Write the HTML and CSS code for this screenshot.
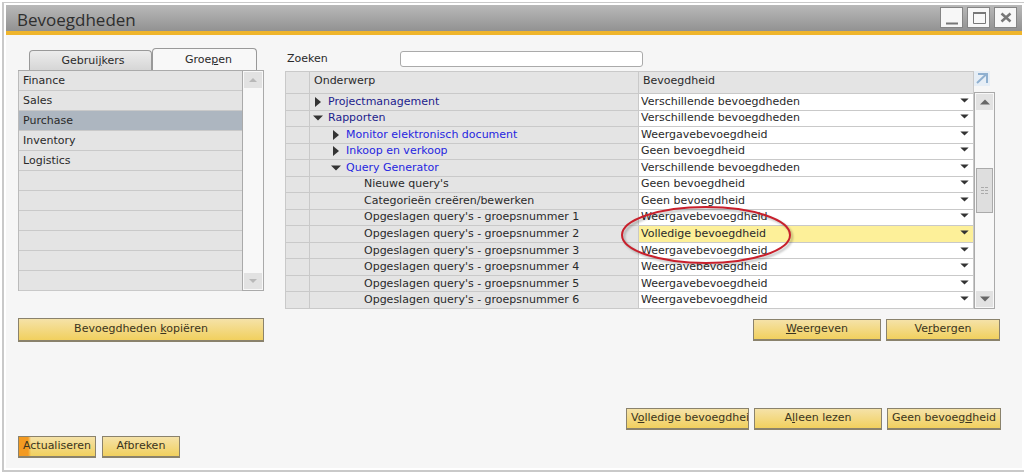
FILE: index.html
```
<!DOCTYPE html>
<html lang="nl">
<head>
<meta charset="utf-8">
<title>Bevoegdheden</title>
<link rel="stylesheet" href="styles.css">
</head>
<body>
<svg class="defs" aria-hidden="true">
  <symbol id="down" viewBox="0 0 10 6"><path d="M0 0.5H10L5 5.5Z"/></symbol>
  <symbol id="up" viewBox="0 0 10 6"><path d="M0 5.5H10L5 0.5Z"/></symbol>
  <symbol id="right" viewBox="0 0 6 10"><path d="M0 0V10L6 5Z"/></symbol>
</svg>
<div class="window">
  <header class="titlebar">
    <h1 class="title">Bevoegdheden</h1>
    <div class="controls">
      <button class="control" aria-label="Minimaliseren"><svg width="18" height="18"><path d="M3 14.5H15" stroke="#777" stroke-width="2"/></svg></button>
      <button class="control" aria-label="Maximaliseren"><svg width="18" height="18"><path d="M3.5 4V14.5H15.5V4" fill="none" stroke="#777"/><path d="M3 4H16" stroke="#777" stroke-width="2"/></svg></button>
      <button class="control" aria-label="Sluiten"><svg width="18" height="18"><path d="M4.500 4.500L13.500 12.500M13.500 4.500L4.500 12.500" stroke="#777" stroke-width="2.500"/></svg></button>
    </div>
  </header>
  <main class="content">
    <div class="columns">
      <section class="left">
        <div class="tabs" role="tablist">
          <button class="tab" role="tab" aria-selected="false">Gebrui<u>j</u>kers</button>
          <button class="tab active" role="tab" aria-selected="true">Groe<u>p</u>en</button>
        </div>
        <div class="listbox">
          <ul class="groups">
            <li class="group">Finance</li>
            <li class="group">Sales</li>
            <li class="group selected">Purchase</li>
            <li class="group">Inventory</li>
            <li class="group">Logistics</li>
            <li class="group"></li><li class="group"></li><li class="group"></li>
            <li class="group"></li><li class="group"></li><li class="group"></li>
          </ul>
          <div class="scrollbar idle">
            <button class="step" aria-label="Omhoog"><svg class="arrow"><use href="#up"/></svg></button>
            <button class="step" aria-label="Omlaag"><svg class="arrow"><use href="#down"/></svg></button>
          </div>
        </div>
        <button class="button copy">Bevoegdheden <u>k</u>opiëren</button>
      </section>
      <section class="right">
        <div class="search">
          <label class="search-label" for="zoeken">Zoeken</label>
          <input class="search-input" id="zoeken" type="text">
        </div>
        <div class="matrix">
          <table class="grid">
            <colgroup><col class="col-mark"><col class="col-subject"><col class="col-auth"></colgroup>
            <thead><tr><th></th><th class="head">Onderwerp</th><th class="head">Bevoegdheid</th></tr></thead>
            <tbody>
              <tr><td></td><td class="l1"><span class="node"><button class="toggle" aria-label="Uitvouwen"><svg class="closed"><use href="#right"/></svg></button>Projectmanagement</span></td><td class="auth"><span class="pick"><select aria-label="Projectmanagement"><option>Verschillende bevoegdheden</option></select><svg class="arrow"><use href="#down"/></svg></span></td></tr>
              <tr><td></td><td class="l1"><span class="node"><button class="toggle" aria-label="Samenvouwen"><svg class="arrow"><use href="#down"/></svg></button>Rapporten</span></td><td class="auth"><span class="pick"><select aria-label="Rapporten"><option>Verschillende bevoegdheden</option></select><svg class="arrow"><use href="#down"/></svg></span></td></tr>
              <tr><td></td><td class="l2"><span class="node"><button class="toggle" aria-label="Uitvouwen"><svg class="closed"><use href="#right"/></svg></button>Monitor elektronisch document</span></td><td class="auth"><span class="pick"><select aria-label="Monitor elektronisch document"><option>Weergavebevoegdheid</option></select><svg class="arrow"><use href="#down"/></svg></span></td></tr>
              <tr><td></td><td class="l2"><span class="node"><button class="toggle" aria-label="Uitvouwen"><svg class="closed"><use href="#right"/></svg></button>Inkoop en verkoop</span></td><td class="auth"><span class="pick"><select aria-label="Inkoop en verkoop"><option>Geen bevoegdheid</option></select><svg class="arrow"><use href="#down"/></svg></span></td></tr>
              <tr><td></td><td class="l2"><span class="node"><button class="toggle" aria-label="Samenvouwen"><svg class="arrow"><use href="#down"/></svg></button>Query Generator</span></td><td class="auth"><span class="pick"><select aria-label="Query Generator"><option>Verschillende bevoegdheden</option></select><svg class="arrow"><use href="#down"/></svg></span></td></tr>
              <tr><td></td><td class="l3">Nieuwe query's</td><td class="auth"><span class="pick"><select aria-label="Nieuwe query's"><option>Geen bevoegdheid</option></select><svg class="arrow"><use href="#down"/></svg></span></td></tr>
              <tr><td></td><td class="l3">Categorieën creëren/bewerken</td><td class="auth"><span class="pick"><select aria-label="Categorieën creëren/bewerken"><option>Geen bevoegdheid</option></select><svg class="arrow"><use href="#down"/></svg></span></td></tr>
              <tr><td></td><td class="l3">Opgeslagen query's - groepsnummer 1</td><td class="auth"><span class="pick"><select aria-label="Groepsnummer 1"><option>Weergavebevoegdheid</option></select><svg class="arrow"><use href="#down"/></svg></span></td></tr>
              <tr><td></td><td class="l3">Opgeslagen query's - groepsnummer 2</td><td class="auth current"><span class="pick"><select aria-label="Groepsnummer 2"><option>Volledige bevoegdheid</option></select><svg class="arrow"><use href="#down"/></svg></span><svg class="marker" viewBox="0 0 174 64"><ellipse cx="87" cy="31" rx="84" ry="28"/></svg></td></tr>
              <tr><td></td><td class="l3">Opgeslagen query's - groepsnummer 3</td><td class="auth"><span class="pick"><select aria-label="Groepsnummer 3"><option>Weergavebevoegdheid</option></select><svg class="arrow"><use href="#down"/></svg></span></td></tr>
              <tr><td></td><td class="l3">Opgeslagen query's - groepsnummer 4</td><td class="auth"><span class="pick"><select aria-label="Groepsnummer 4"><option>Weergavebevoegdheid</option></select><svg class="arrow"><use href="#down"/></svg></span></td></tr>
              <tr><td></td><td class="l3">Opgeslagen query's - groepsnummer 5</td><td class="auth"><span class="pick"><select aria-label="Groepsnummer 5"><option>Weergavebevoegdheid</option></select><svg class="arrow"><use href="#down"/></svg></span></td></tr>
              <tr><td></td><td class="l3">Opgeslagen query's - groepsnummer 6</td><td class="auth"><span class="pick"><select aria-label="Groepsnummer 6"><option>Weergavebevoegdheid</option></select><svg class="arrow"><use href="#down"/></svg></span></td></tr>
            </tbody>
          </table>
          <div class="side">
            <button class="expand" aria-label="Vergroten"><svg width="16" height="15"><path d="M3 12L12 3.500M4 3H13V12" fill="none" stroke="#8fb0d0" stroke-width="2"/></svg></button>
            <div class="scrollbar">
              <button class="step" aria-label="Omhoog"><svg class="arrow"><use href="#up"/></svg></button>
              <div class="before"></div>
              <div class="thumb"><svg width="9" height="9"><path d="M1 1.500H4M5 1.500H8M1 4.500H4M5 4.500H8M1 7.500H4M5 7.500H8" stroke="#aaa"/></svg></div>
              <div class="after"></div>
              <button class="step" aria-label="Omlaag"><svg class="arrow"><use href="#down"/></svg></button>
            </div>
          </div>
        </div>
        <div class="actions">
          <button class="button wide"><u>W</u>eergeven</button>
          <button class="button">Ve<u>r</u>bergen</button>
        </div>
      </section>
    </div>
    <div class="bulk">
      <button class="button clipped">V<u>o</u>lledige bevoegdheid</button>
      <button class="button wide">A<u>l</u>leen lezen</button>
      <button class="button">Geen bevoeg<u>d</u>heid</button>
    </div>
    <footer class="footer">
      <button class="button small primary">Actualiseren</button>
      <button class="button small">Afbreken</button>
    </footer>
  </main>
</div>
</body>
</html>
```
FILE: styles.css
```
* { box-sizing: border-box; }
body {
  margin: 0;
  padding: 2px 0 3px 2px;
  min-height: 100vh;
  display: flex;
  background: #fff;
  color: #2a2a2a;
  font: 11px/14px "DejaVu Sans", Verdana, sans-serif;
}
button, input, select { font: inherit; color: inherit; margin: 0; padding: 0; }
button { border: 0; background: none; }
.defs { position: absolute; width: 0; height: 0; }
.arrow { width: 10px; height: 6px; fill: #333; }
.closed { width: 6px; height: 10px; fill: #333; }

.window {
  flex: 1;
  display: flex;
  flex-direction: column;
  border: 2px solid #c9c9c9;
  border-top-width: 1px;
  border-right: 0;
  padding: 2px;
  background: #fff;
}
.titlebar {
  display: flex;
  justify-content: space-between;
  height: 30px;
  padding: 2px 5px 0 11px;
  background: linear-gradient(#b9b9b9, #929292);
  border-bottom: 4px solid #efb52c;
}
.title { margin: 0; font: 17px/26px "Open Sans", sans-serif; color: #2e2e2e; }
.controls { display: flex; gap: 4px; }
.control {
  width: 23px;
  height: 21px;
  display: grid;
  place-items: center;
  border: 1px solid #858585;
  background: #f7f7f7;
}
.content { flex: 1; padding: 13px 21px 10px 12px; background: #f6f6f6; }
.columns { display: grid; grid-template-columns: 246px 1fr; gap: 21px; }

.tabs { display: flex; align-items: flex-end; padding: 0 7px 0 11px; height: 22px; }
.tab {
  flex: 1;
  height: 20px;
  border: 1px solid #999;
  border-bottom: 0;
  border-radius: 4px 4px 0 0;
  background: linear-gradient(#ececec, #d6d6d6);
}
.tab:first-child { padding-left: 5px; }
.tab.active { flex: 0 0 105px; height: 22px; background: #f8f8f8; padding-left: 8px; }
.listbox { display: flex; border-top: 1px solid #aaa; }
.groups { flex: 1; margin: 0; padding: 0; list-style: none; border-left: 1px solid #bbb; }
.group {
  height: 20px;
  padding: 3px 4px 2px;
  border-bottom: 1px solid #c9c9c9;
  background: #e4e4e4;
}
.group.selected { background: #adb6c0; }

.scrollbar {
  flex: 1;
  display: flex;
  flex-direction: column;
  align-items: stretch;
  padding: 1px;
  border: 1px solid #aaa;
  background: #f8f8f8;
}
.idle { flex: 0 0 22px; justify-content: space-between; border-top: 0; }
.step { height: 16px; display: grid; place-items: center; background: #e2e2e2; }
.step .arrow { fill: #666; }
.idle .step .arrow { fill: #b8b8b8; width: 8px; }
.before { flex: 57; }
.after { flex: 77; }
.thumb { height: 45px; display: grid; place-items: center; border: 1px solid #aaa; background: #dedede; }

.button {
  width: 114px;
  height: 22px;
  padding: 0 4px 2px;
  border: 1px solid #8a826c;
  border-bottom-width: 2px;
  background: linear-gradient(#f5e2a8, #f1d05e);
  color: #3a3420;
  white-space: nowrap;
  overflow: hidden;
}
.wide { width: 128px; }
.copy { width: 100%; height: 24px; margin-top: 27px; }
.clipped { width: 123px; text-align: left; padding-right: 0; }
.small { width: 78px; padding: 0 0 2px; }
.primary { background: linear-gradient(90deg, #f39a21 9px, transparent 12px), linear-gradient(#f5e2a8, #f1d05e); }

.search { display: flex; align-items: center; height: 22px; margin-bottom: 1px; }
.search-label { width: 115px; padding-left: 2px; }
.search-input { width: 243px; height: 16px; border: 1px solid #aaa; border-radius: 3px; background: #fff; }

.matrix { display: flex; padding-right: 6px; }
.grid { flex: 1; height: 238px; table-layout: fixed; border-collapse: collapse; background: #e4e4e4; }
.col-mark { width: 24px; }
.col-subject { width: 329px; }
.grid th, .grid td {
  padding: 0;
  border: 1px solid #c9c9c9;
  text-align: left;
  font-weight: normal;
  line-height: 14px;
  white-space: nowrap;
}
.grid th { height: 22px; padding-bottom: 4px; }
.grid .head { padding-left: 4px; }
.grid td { height: 16px; }
.grid .l1 { padding-left: 3px; color: #1c1c8c; }
.grid .l2 { padding-left: 21px; color: #2626e0; }
.grid .l3 { padding-left: 54px; }
.node { display: flex; align-items: center; }
.toggle { width: 10px; height: 10px; margin-right: 5px; display: grid; place-items: center; }
.grid .auth { position: relative; background: #fff; }
.grid .current { background: #fdf099; }
.pick { display: grid; align-items: center; }
.pick select {
  grid-area: 1 / 1;
  width: 100%;
  height: 14px;
  padding-left: 2px;
  appearance: none;
  border: 0;
  background: transparent;
}
.pick .arrow {
  grid-area: 1 / 1;
  justify-self: end;
  width: 9px;
  height: 5px;
  margin: 0 4px 3px 0;
  pointer-events: none;
}
.marker {
  position: absolute;
  left: -20px;
  top: -22px;
  z-index: 1;
  width: 174px;
  height: 64px;
  fill: none;
  stroke: #c8202c;
  stroke-width: 2;
  filter: drop-shadow(2px 2px 1px #0004);
  pointer-events: none;
}
.side { width: 21px; display: flex; flex-direction: column; }
.expand { width: 16px; height: 15px; margin-bottom: 6px; display: grid; background: #e6eef6; }
.actions, .bulk { display: flex; justify-content: flex-end; gap: 5px; }
.actions { padding: 10px 1px 0 0; }
.bulk { padding-top: 66px; }
.footer { display: flex; gap: 6px; padding-top: 6px; }
```
